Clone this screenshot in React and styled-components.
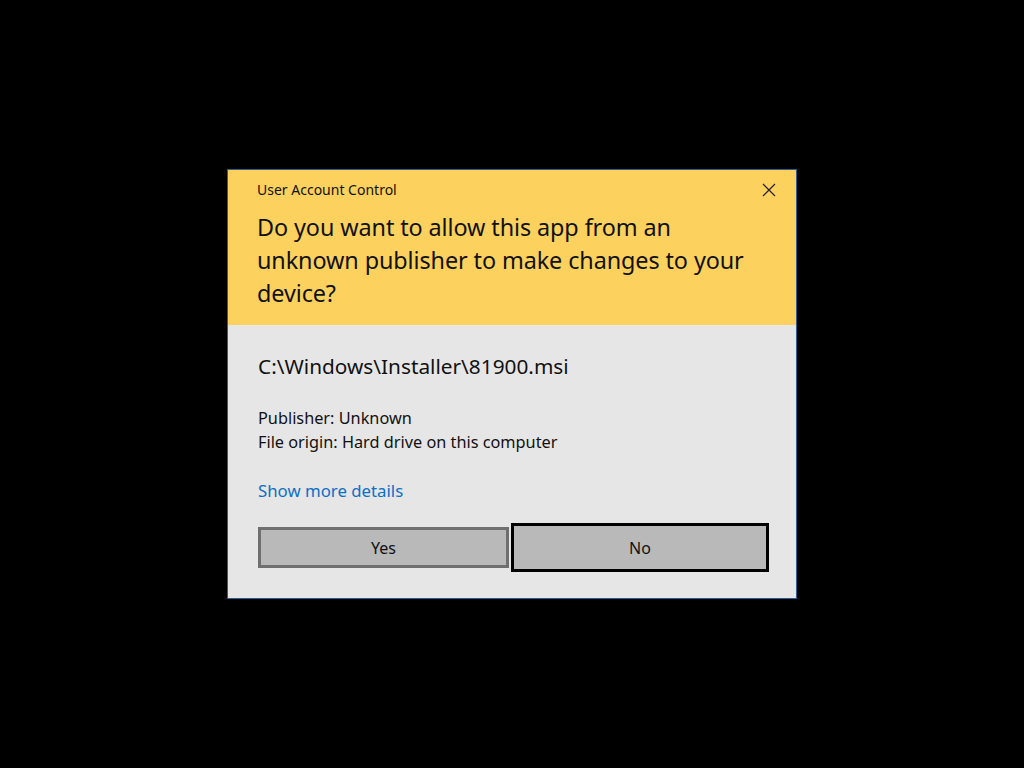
import React from "react";
import styled, { createGlobalStyle } from "styled-components";

const GlobalStyle = createGlobalStyle`
  html, body {
    margin: 0;
    padding: 0;
    background: #000;
  }
  body {
    font-family: "Noto Sans", "Open Sans", sans-serif;
  }
`;

const Screen = styled.div`
  width: 1024px;
  height: 768px;
  background: #000;
  display: flex;
  align-items: center;
  justify-content: center;
`;

const Dialog = styled.div`
  width: 568px;
  height: 428px;
  border: 1px solid #2b5d94;
  background: #e6e6e6;
  display: flex;
  flex-direction: column;
`;

const Header = styled.div`
  background: #fcd15d;
  height: 155px;
  box-sizing: border-box;
  padding: 8px 17px 0 29px;
  color: #111;
`;

const TitleBar = styled.div`
  display: flex;
  justify-content: space-between;
  align-items: center;
  height: 22px;
`;

const Title = styled.span`
  font-size: 14px;
`;

const CloseButton = styled.button`
  border: 0;
  background: transparent;
  padding: 0;
  width: 20px;
  height: 20px;
  margin-top: 1px;
  display: flex;
  align-items: center;
  justify-content: center;
  cursor: pointer;
`;

const Question = styled.h1`
  margin: 11px 0 0;
  max-width: 505px;
  font-size: 23.4px;
  letter-spacing: -0.1px;
  font-weight: 400;
  line-height: 33px;
`;

const Body = styled.div`
  flex: 1;
  padding: 0 27px 0 30px;
  color: #111;
  display: flex;
  flex-direction: column;
`;

const FilePath = styled.div`
  margin-top: 27px;
  font-size: 20.8px;
  line-height: 28px;
`;

const Details = styled.div`
  margin-top: 26px;
  font-size: 16.3px;
  line-height: 24px;
`;

const MoreLink = styled.a`
  margin-top: 25px;
  font-size: 16.8px;
  line-height: 24px;
  color: #0b6fc6;
  text-decoration: none;
  cursor: pointer;
`;

const ButtonRow = styled.div`
  margin-top: 20px;
  display: flex;
  align-items: center;
  gap: 2px;
`;

const Button = styled.button`
  box-sizing: border-box;
  font-family: inherit;
  font-size: 16px;
  color: #111;
  background: #b9b9b9;
  border: 3px solid ${(p) => (p.$focused ? "#000" : "#6f6f6f")};
  width: ${(p) => (p.$focused ? "258px" : "251px")};
  height: ${(p) => (p.$focused ? "49px" : "41px")};
  padding: 0;
  cursor: pointer;
`;

export default function App() {
  return (
    <>
      <GlobalStyle />
      <Screen>
        <Dialog>
          <Header>
            <TitleBar>
              <Title>User Account Control</Title>
              <CloseButton aria-label="Close">
                <svg width="14" height="14" viewBox="0 0 14 14">
                  <path d="M1 1 L13 13 M13 1 L1 13" stroke="#222" strokeWidth="1.2" />
                </svg>
              </CloseButton>
            </TitleBar>
            <Question>
              Do you want to allow this app from an unknown publisher to make changes to your device?
            </Question>
          </Header>
          <Body>
            <FilePath>C:\Windows\Installer\81900.msi</FilePath>
            <Details>
              Publisher: Unknown
              <br />
              File origin: Hard drive on this computer
            </Details>
            <MoreLink>Show more details</MoreLink>
            <ButtonRow>
              <Button>Yes</Button>
              <Button $focused>No</Button>
            </ButtonRow>
          </Body>
        </Dialog>
      </Screen>
    </>
  );
}
